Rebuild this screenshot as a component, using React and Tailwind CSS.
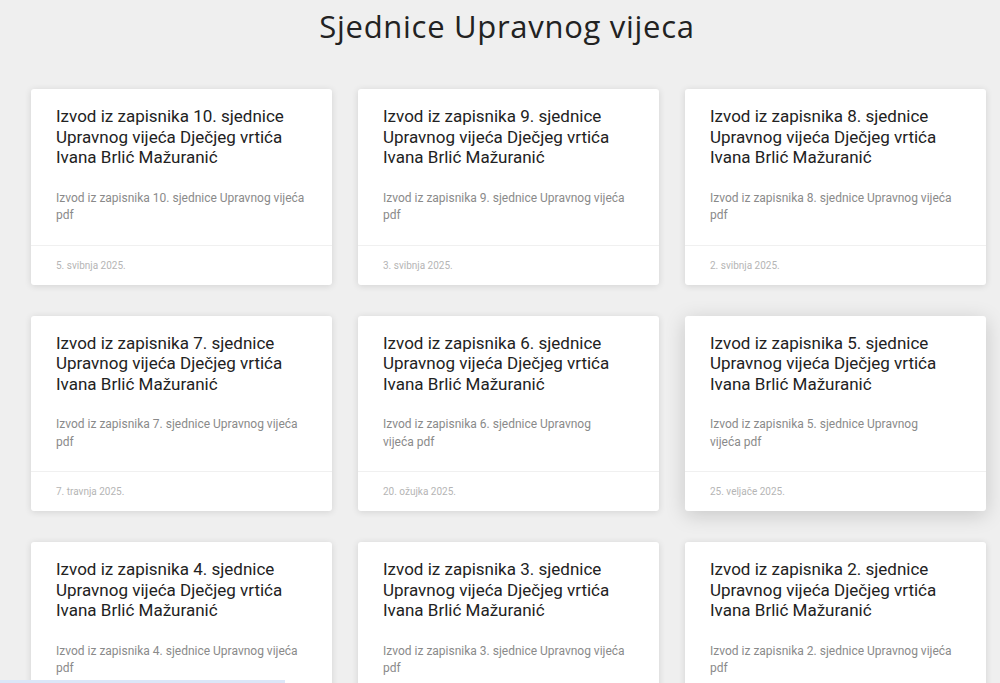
import React from "react";

const sessions = [
  { no: 10, desc: ["Izvod iz zapisnika 10. sjednice Upravnog vijeća", "pdf"], date: "5. svibnja 2025." },
  { no: 9, desc: ["Izvod iz zapisnika 9. sjednice Upravnog vijeća", "pdf"], date: "3. svibnja 2025." },
  { no: 8, desc: ["Izvod iz zapisnika 8. sjednice Upravnog vijeća", "pdf"], date: "2. svibnja 2025." },
  { no: 7, desc: ["Izvod iz zapisnika 7. sjednice Upravnog vijeća", "pdf"], date: "7. travnja 2025." },
  { no: 6, desc: ["Izvod iz zapisnika 6. sjednice Upravnog", "vijeća pdf"], date: "20. ožujka 2025." },
  { no: 5, desc: ["Izvod iz zapisnika 5. sjednice Upravnog", "vijeća pdf"], date: "25. veljače 2025.", active: true },
  { no: 4, desc: ["Izvod iz zapisnika 4. sjednice Upravnog vijeća", "pdf"], date: "1. veljače 2025." },
  { no: 3, desc: ["Izvod iz zapisnika 3. sjednice Upravnog vijeća", "pdf"], date: "20. siječnja 2025." },
  { no: 2, desc: ["Izvod iz zapisnika 2. sjednice Upravnog vijeća", "pdf"], date: "10. siječnja 2025." },
];

const SessionCard = ({ item }) => (
  <div
    className={`bg-white rounded-[3px] flex flex-col ${
      item.active
        ? "shadow-[0_4px_20px_rgba(0,0,0,0.17)]"
        : "shadow-[0_1px_7px_rgba(0,0,0,0.12)]"
    }`}
  >
    <div className="px-[25px] pt-[17px] pb-[20px]">
      <h2 className="text-[17px] leading-[20.5px] text-[#222] font-normal">
        Izvod iz zapisnika {item.no}. sjednice Upravnog vijeća Dječjeg vrtića
        Ivana Brlić Mažuranić
      </h2>
      <p className="mt-[22px] text-[12px] leading-[17.5px] text-[#8a8a8a] whitespace-nowrap">
        {item.desc[0]}
        <br />
        {item.desc[1]}
      </p>
    </div>
    <div className="border-t border-[#f0f0f0] px-[25px] h-[40px] flex items-center text-[10px] text-[#b5b5b5]">
      {item.date}
    </div>
  </div>
);

const App = () => {
  return (
    <div
      className="min-h-screen bg-[#efefef] pb-10"
      style={{ fontFamily: "Roboto, 'Liberation Sans', sans-serif" }}
    >
      <h1
        className="text-center text-[31px] leading-[40px] pt-[6px] pl-[14px] text-[#222] font-normal tracking-[0.7px]"
        style={{ fontFamily: "'Open Sans', 'Liberation Sans', sans-serif" }}
      >
        Sjednice Upravnog vijeca
      </h1>
      <div className="grid grid-cols-[301px_301px_301px] gap-x-[26px] gap-y-[31px] pl-[31px] mt-[43px]">
        {sessions.map((item) => (
          <SessionCard key={item.no} item={item} />
        ))}
      </div>
      <div className="fixed left-0 bottom-0 w-[285px] h-[3px] bg-[#dce7f8]" />
    </div>
  );
};

export default App;
